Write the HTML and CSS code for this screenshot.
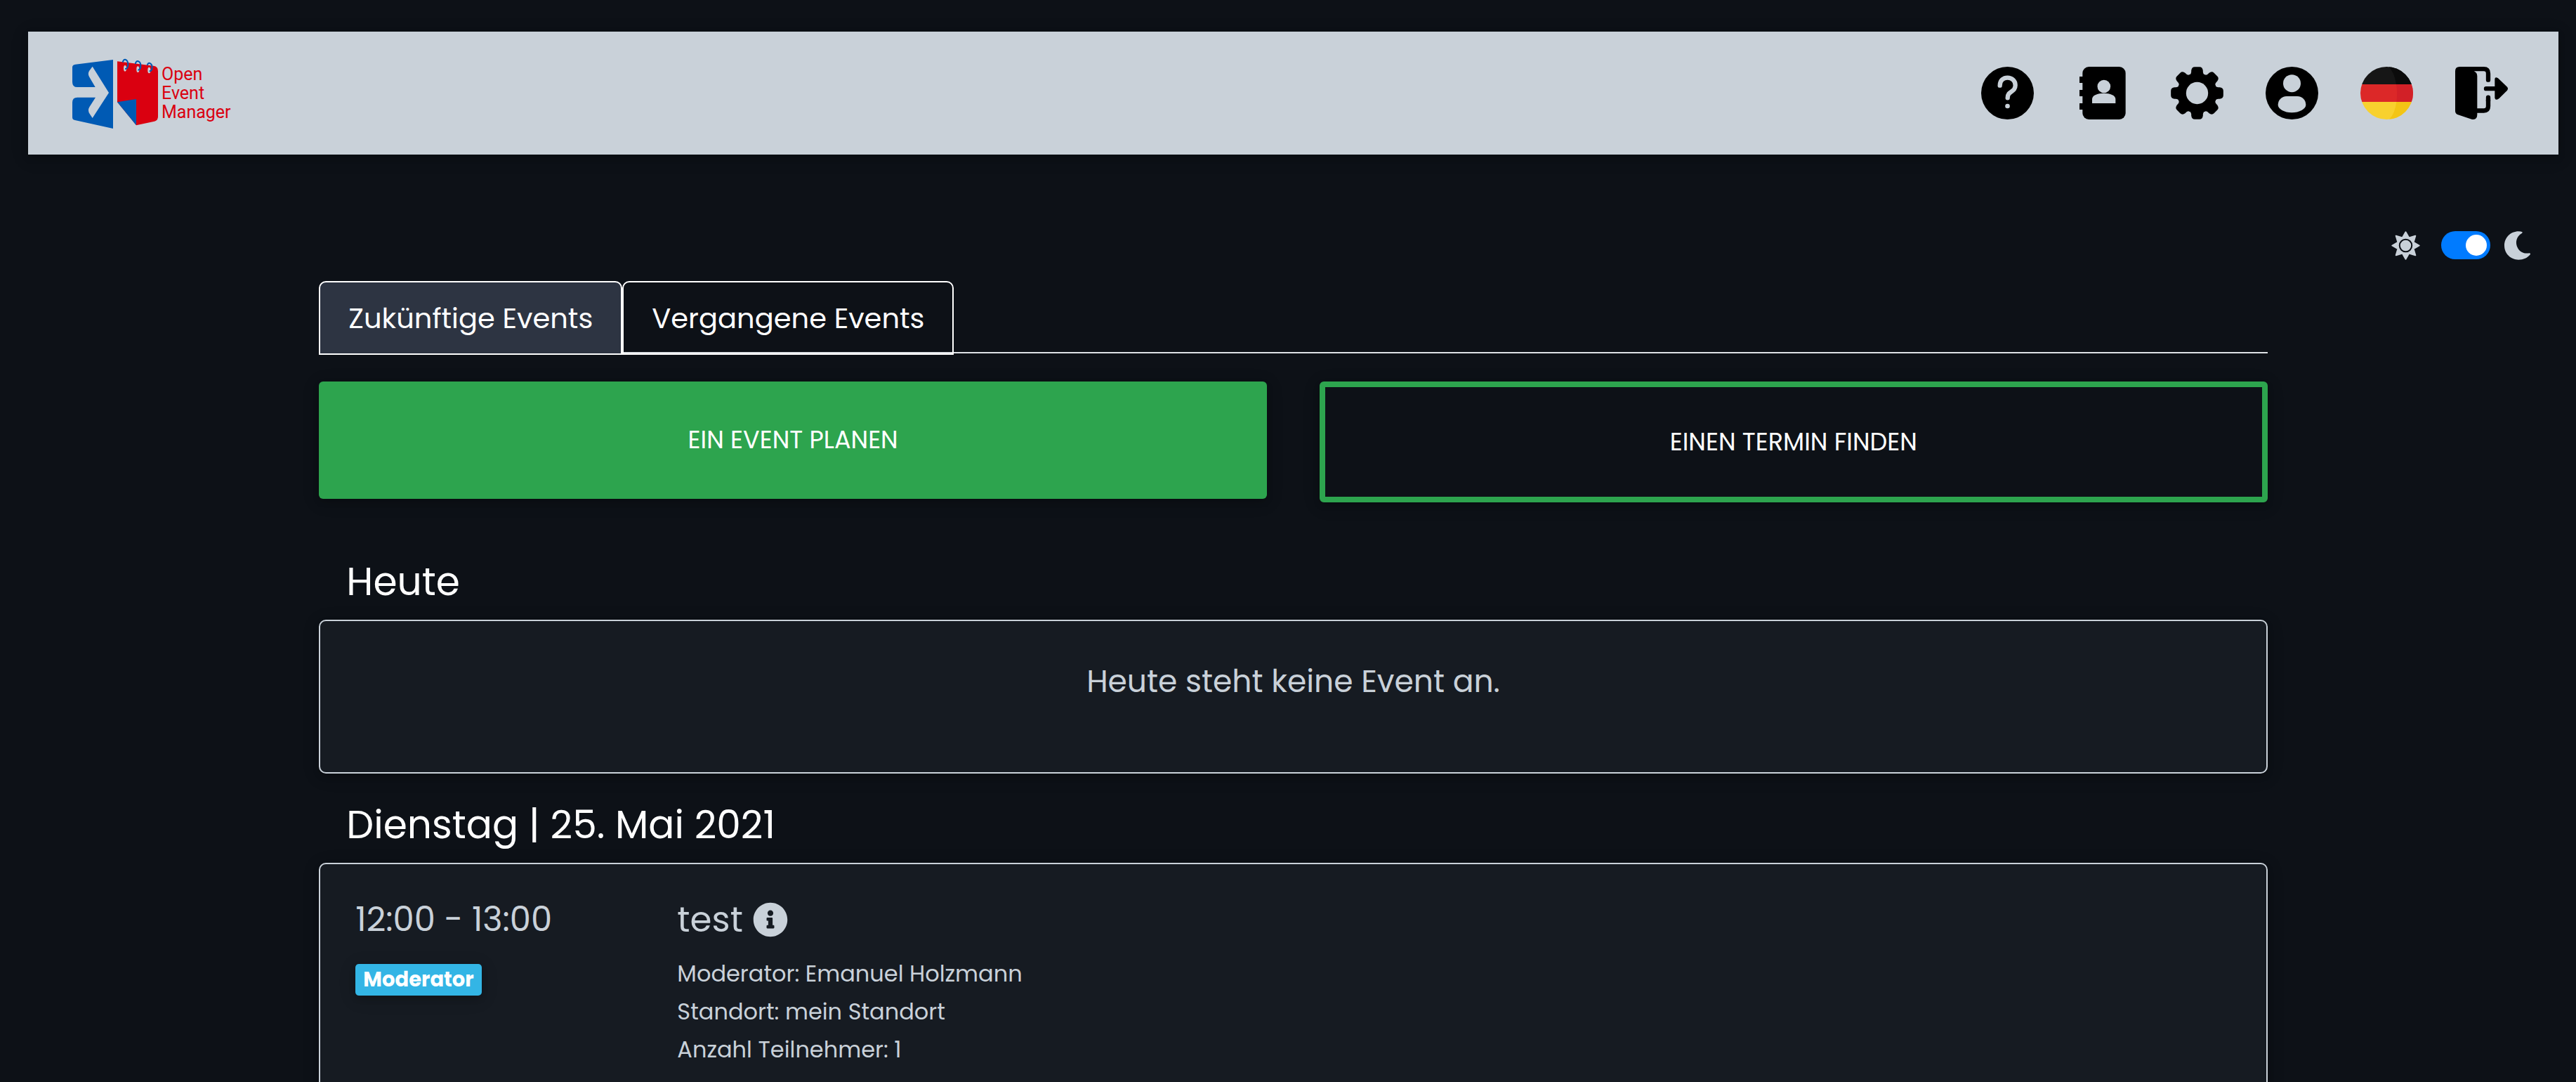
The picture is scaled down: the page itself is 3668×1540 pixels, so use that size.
FILE: index.html
```html
<!DOCTYPE html>
<html lang="de">
<head>
<meta charset="utf-8">
<meta name="viewport" content="width=device-width, initial-scale=1">
<title>Open Event Manager</title>
<link rel="stylesheet" href="styles.css">
</head>
<body>
<header class="navbar">
  <a class="brand" href="#">
    <svg class="brand-mark" viewBox="300 240 390 318" aria-hidden="true">
      <path fill="#005ab4" fill-rule="evenodd" d="M322 275 L483 255 V549 L320 513 Q309 511 309 501 V438 Q309 416 330 416 H408 L382 457 Q373 472 383 486 L395 504 L465 396 L395 284 L381 303 Q374 315 381 328 L407 372 H330 Q309 372 309 350 V287 Q309 276 322 275Z"/>
      <path fill="#da0010" d="M501 262 L656 281 Q675 284 675 303 V498 Q675 514 660 518 L582 535 L501 436Z"/>
      <path fill="#005ab4" d="M501 436 L582 423 V535Z"/>
      <g fill="#c9d1d9"><ellipse cx="534" cy="292" rx="6" ry="13"/><ellipse cx="589" cy="296" rx="6" ry="13"/><ellipse cx="637" cy="300" rx="6" ry="13"/></g>
      <g fill="none" stroke="#005ab4" stroke-width="6">
        <path d="M524 266 Q527 253 535 254 Q547 257 547 276 Q546 295 534 294"/>
        <path d="M578 273 Q581 260 589 261 Q601 264 601 281 Q600 299 589 299"/>
        <path d="M629 279 Q632 268 638 269 Q650 272 650 288 Q649 304 638 304"/>
      </g>
    </svg>
    <span class="brand-name">Open<br>Event<br>Manager</span>
  </a>
  <nav class="actions">
    <a href="#" aria-label="Hilfe">
      <svg viewBox="123 105 225 225"><circle cx="235.500" cy="217.500" r="112.500"/><path fill="none" stroke="#c9d1d9" stroke-width="19" stroke-linecap="round" d="M203 185 C203 139 269 143 269 184 C269 216 236 206 236 238"/><circle fill="#c9d1d9" cx="235.500" cy="273" r="10"/></svg>
    </a>
    <a href="#" aria-label="Adressbuch">
      <svg viewBox="528 105 225 225"><rect x="556" y="105" width="184" height="225" rx="27"/><path d="M543 147h20v27h-20zM543 204h20v27h-20zM543 261h20v27h-20z"/><circle fill="#c9d1d9" cx="647.500" cy="189" r="28"/><path fill="#c9d1d9" d="M597 261V243C597 227 620 218 647 218S697 227 697 243V261Z"/></svg>
    </a>
    <a href="#" aria-label="Einstellungen">
      <svg viewBox="-112.500 -112.500 225 225">
        <circle r="85"/>
        <g>
          <path id="tooth" d="M-40 -76 Q-27 -76 -25 -90 V-96 Q-23 -112 -10 -112 H10 Q23 -112 25 -96 V-90 Q27 -76 40 -76 L0 -60Z"/>
          <use href="#tooth" transform="rotate(45)"/><use href="#tooth" transform="rotate(90)"/><use href="#tooth" transform="rotate(135)"/><use href="#tooth" transform="rotate(180)"/><use href="#tooth" transform="rotate(225)"/><use href="#tooth" transform="rotate(270)"/><use href="#tooth" transform="rotate(315)"/>
        </g>
        <circle fill="#c9d1d9" r="47"/>
      </svg>
    </a>
    <a href="#" aria-label="Profil">
      <svg viewBox="138 105 225 225"><circle cx="250.500" cy="217.500" r="112.500"/><circle fill="#c9d1d9" cx="250.500" cy="176" r="37.500"/><path fill="#c9d1d9" d="M228 231H273C296 231 310 248 310 268C310 286 282 301 250 301S191 286 191 268C191 248 206 231 228 231Z"/></svg>
    </a>
    <a href="#" aria-label="Sprache: Deutsch">
      <svg viewBox="543 105 225 225">
        <clipPath id="disc"><circle cx="655.500" cy="217.500" r="112.500"/></clipPath>
        <g clip-path="url(#disc)">
          <path fill="#161616" d="M543 105h225v75H543z"/><path fill="#dc2828" d="M543 180h225v75H543z"/><path fill="#f8d12e" d="M543 255h225v75H543z"/>
          <path fill="#0b0b0b" d="M664 105Q688 128 696 180H768V105Z"/><path fill="#d22027" d="M696 180Q702 217 697 255H768V180Z"/><path fill="#f3c515" d="M697 255Q690 306 666 330H768V255Z"/>
        </g>
      </svg>
    </a>
    <a href="#" aria-label="Abmelden">
      <svg viewBox="948 105 225 225"><path d="M967 105H1030V125L1036 129Q1042 134 1042 144V310Q1042 334 1018 329L960 310Q948 306 948 294V124Q948 105 967 105Z"/><g fill="none" stroke="#000" stroke-width="19"><path stroke-linecap="round" d="M1028 114.500H1070Q1089 114.500 1089 134V161"/><path d="M1040 292.500H1070Q1089 292.500 1089 273V246"/><path stroke-linecap="round" d="M1089 250V236M1080 198.500H1120"/></g><path d="M1117 160Q1117 145 1131 154L1170 191Q1176 198 1170 206L1135 241Q1119 252 1117 236Z"/></svg>
    </a>
  </nav>
</header>

<div class="theme">
  <svg class="theme-icon" viewBox="-61 -61 122 122" aria-hidden="true">
    <path fill="#c9d1d9" stroke="#c9d1d9" stroke-width="6" stroke-linejoin="round" d="M0 -57 L14 -33 L41 -41 L33 -14 L57 0 L33 14 L41 41 L14 33 L0 57 L-14 33 L-41 41 L-33 14 L-57 0 L-33 -14 L-41 -41 L-14 -33Z"/>
    <circle r="26" fill="#c9d1d9" stroke="#0d1117" stroke-width="6"/>
  </svg>
  <input class="switch" type="checkbox" role="switch" aria-label="Dunkles Design" checked>
  <svg class="theme-icon" viewBox="621 86 122 122" aria-hidden="true"><path fill="#c9d1d9" d="M681 87Q692 87 697 90Q700 92 694 96C672 108 665 136 678 158C688 175 706 183 727 179Q733 179 731 184C719 199 702 207 681 207C648 207 621 181 621 147S648 87 681 87Z"/></svg>
</div>

<main class="content">
  <div class="tabs" role="tablist">
    <button class="tab tab-active" role="tab" aria-selected="true">Zukünftige Events</button>
    <button class="tab" role="tab" aria-selected="false">Vergangene Events</button>
  </div>
  <div class="cta">
    <button class="btn btn-solid">EIN EVENT PLANEN</button>
    <button class="btn btn-outline">EINEN TERMIN FINDEN</button>
  </div>

  <h2 class="day day-first">Heute</h2>
  <section class="card card-empty"><p>Heute steht keine Event an.</p></section>

  <h2 class="day">Dienstag | 25. Mai 2021</h2>
  <section class="card event">
    <div>
      <p class="event-time">12:00 - 13:00</p>
      <span class="badge">Moderator</span>
    </div>
    <div>
      <h3 class="event-title">test
        <svg class="info" viewBox="0 0 512 512" role="img" aria-label="Info"><path fill="#c9d1d9" d="M256 8C119 8 8 119 8 256s111 248 248 248 248-111 248-248S393 8 256 8zm0 110c23 0 42 19 42 42s-19 42-42 42-42-19-42-42 19-42 42-42zm56 254c0 7-5 12-12 12h-88c-7 0-12-5-12-12v-24c0-7 5-12 12-12h12v-64h-12c-7 0-12-5-12-12v-24c0-7 5-12 12-12h64c7 0 12 5 12 12v100h12c7 0 12 5 12 12v24z"/></svg>
      </h3>
      <ul class="details">
        <li>Moderator: Emanuel Holzmann</li>
        <li>Standort: mein Standort</li>
        <li>Anzahl Teilnehmer: 1</li>
      </ul>
    </div>
  </section>
</main>
</body>
</html>
```
FILE: styles.css
```css
* { box-sizing: border-box; }

html { height: 100%; overflow: hidden; }

body {
  height: 100%;
  margin: 0;
  padding: 45px 25px 0 40px;
  overflow-y: auto;
  scrollbar-width: none;
  background: #0d1117;
  color: #c9d1d9;
  font-family: Poppins, Inter, sans-serif;
}

h2, h3, p, ul { margin: 0; padding: 0; font-weight: 400; }
button { font: inherit; color: #fff; margin: 0; cursor: pointer; }

.navbar, .btn, .card, .badge {
  box-shadow: 0 4px 10px rgba(0, 0, 0, 0.16), 0 4px 24px rgba(0, 0, 0, 0.16);
}

.navbar {
  display: flex;
  align-items: center;
  justify-content: space-between;
  height: 175px;
  padding: 0 72px 0 60px;
  background: #c9d1d9;
}

.brand { display: flex; align-items: center; text-decoration: none; }
.brand-mark { width: 130px; height: 106px; }
.brand-name { color: #da0010; font: 25px/27px Roboto, sans-serif; }

.actions { display: flex; gap: 60px; }
.actions a { display: block; height: 75px; }
.actions svg { width: 75px; height: 75px; }

.theme {
  display: flex;
  align-items: center;
  justify-content: flex-end;
  gap: 20px;
  height: 42px;
  margin-top: 108px;
  padding-right: 36px;
}
.theme-icon { width: 41px; height: 41px; }

.switch {
  appearance: none;
  width: 70px;
  height: 40px;
  margin: 0 0 0 10px;
  padding: 5px;
  border-radius: 20px;
  background: #495057;
}
.switch::before {
  content: "";
  display: block;
  width: 30px;
  height: 30px;
  border-radius: 50%;
  background: #fff;
}
.switch:checked { background: #007bff; }
.switch:checked::before { margin-left: auto; }

.content { width: 77%; margin: 30px auto 0; padding-bottom: 60px; }

.tabs {
  display: flex;
  height: 103px;
  border-bottom: 2px solid #dee2e6;
}
.tab {
  height: 105px;
  padding: 0 40px;
  border: 2px solid #fff;
  border-radius: 10px 10px 0 0;
  background: transparent;
  font-size: 40px;
}
.tab-active { background: #2d3442; }

.cta {
  display: grid;
  grid-template-columns: 1fr 1fr;
  align-items: start;
  gap: 75px;
  margin-top: 40px;
}
.btn {
  padding: 59px 20px 61px;
  border: 0 solid #2da44e;
  border-radius: 6px;
  font-size: 35px;
  line-height: 47px;
}
.btn-solid { background: #2da44e; }
.btn-outline { padding: 54px 20px 55px; border-width: 8px; background: #0d1117; }

.day {
  margin: 39px 0 20px;
  padding-left: 39px;
  color: #fff;
  font-size: 55px;
  line-height: 68px;
}
.day-first { margin-top: 79px; }

.card {
  border: 2px solid #c9d1d9;
  border-radius: 10px;
  background: #161b22;
}
.card-empty {
  padding: 59px 40px 102px;
  font-size: 44px;
  line-height: 54px;
  text-align: center;
}

.event {
  display: grid;
  grid-template-columns: 458px 1fr;
  padding: 49px 50px;
}
.event-title, .event-time { line-height: 60px; }
.event-time { font-size: 48px; }
.event-title {
  display: flex;
  align-items: center;
  gap: 14px;
  font-size: 50px;
}
.info { width: 50px; height: 50px; }

.badge {
  display: inline-block;
  margin-top: 33px;
  padding: 0 11px;
  border-radius: 5px;
  background: #33b5e5;
  color: #fff;
  font-size: 29px;
  font-weight: 700;
  line-height: 45px;
}

.details {
  margin-top: 20px;
  list-style: none;
  font-size: 32px;
  line-height: 54px;
}
```
